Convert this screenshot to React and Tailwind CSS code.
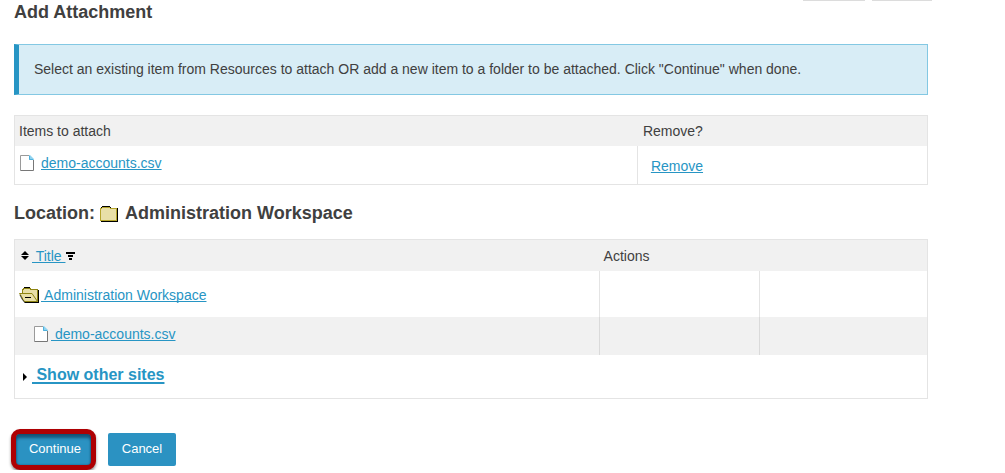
import React from "react";

const linkClass =
  "text-[#2795c4] underline decoration-1 underline-offset-1 [text-decoration-skip-ink:none]";

function FileIcon({ className = "" }) {
  return (
    <svg className={"shrink-0 " + className} width="14" height="16" viewBox="0 0 14 16" fill="none" aria-hidden="true">
      <path d="M.5.5h9l4 4v11H.5z" fill="#fff" />
      <path d="M.5 15.500V.5h9" stroke="#9a9a9a" />
      <path d="M.5 15.500h13V4.500" stroke="#777" />
      <path d="M9 0h1l4 4v1H9z" fill="#8fd3f0" />
      <path d="M9.500 1v3.500H13" stroke="#4fb0dc" />
    </svg>
  );
}

function FolderIcon() {
  return (
    <svg className="mt-0.5 shrink-0" width="18" height="16" viewBox="0 0 18 16" shapeRendering="crispEdges" aria-hidden="true">
      <path d="M1 2h17v14H1z" fill="#000" />
      <path d="M2 0h8v1H2zM1 1h1v1H1zM10 1h1v1h-1z" fill="#000" />
      <path d="M0 2h17v13H0z" fill="#b5a52c" />
      <path d="M2 1h8v1H2z" fill="#b5a52c" />
      <path d="M1 3h15v11H1z" fill="#e8dfa7" />
      <path d="M2 2h8v1H2z" fill="#e8dfa7" />
    </svg>
  );
}

function OpenFolderIcon() {
  return (
    <svg className="shrink-0" width="20" height="16" viewBox="0 0 20 16" aria-hidden="true">
      <g shapeRendering="crispEdges">
        <path d="M5 0h6v1H5zM4 1h1v1H4zM11 1h1v1h-1zM19 3h1v13h-1zM6 15h14v1H6z" fill="#000" />
        <path d="M3 2h1V1h8v1h7v13H5v-1H4v-2H3z" fill="#8e8412" />
        <path d="M4 3h1V2h6v1h7v11H4z" fill="#e8dfa7" />
      </g>
      <path d="M.5 6.500H13l5.500 8H5.500L4 12.500 2.500 9.500z" fill="#e8dfa7" stroke="#8e8412" />
      <path d="M6 10h6v1H6z" fill="#000" />
      <path d="M1 8l2 4 3 4" fill="none" stroke="#000" strokeWidth=".7" />
    </svg>
  );
}

function Caption({ children }) {
  return <h2 className="flex items-center text-lg leading-6 font-bold">{children}</h2>;
}

export default function App() {
  return (
    <div className="bg-white font-['Liberation_Sans',Arial,sans-serif] text-sm leading-5 text-[#404040]">
      <div className="flex h-px justify-end gap-[7px] pr-[73px]" aria-hidden="true">
        <div className="w-[62px] bg-[#dcdcdc]" />
        <div className="w-[60px] bg-[#dcdcdc]" />
      </div>

      <main className="pr-[77px] pl-3.5">
        <h1 className="-mt-px text-lg leading-6 font-bold">Add Attachment</h1>

        <p className="mt-5 border border-l-[5px] border-[#83c8e3] border-l-[#2795c4] bg-[#d8edf6] px-[15px] pt-3.5 pb-[15px]">
          Select an existing item from Resources to attach OR add a new item to a folder to be
          attached. Click "Continue" when done.
        </p>

        <table className="mt-5 w-full table-fixed border-separate border-spacing-0 border border-[#e4e4e4] text-left">
          <colgroup>
            <col className="w-[68.3%]" />
            <col />
          </colgroup>
          <thead className="bg-[#f1f1f1]">
            <tr>
              <th className="h-[30px] px-1 font-normal">Items to attach</th>
              <th className="px-[5px] font-normal">Remove?</th>
            </tr>
          </thead>
          <tbody>
            <tr>
              <td className="h-[38px] border-r border-[#e4e4e4] px-[5px] pb-1">
                <div className="flex items-center gap-[7px]">
                  <FileIcon />
                  <a href="#file" className={linkClass}>demo-accounts.csv</a>
                </div>
              </td>
              <td className="px-[13px] pt-0.5">
                <a href="#remove" className={linkClass}>Remove</a>
              </td>
            </tr>
          </tbody>
        </table>

        <div className="mt-4">
          <Caption>
            <span className="mr-[5px]">Location:</span>
            <FolderIcon />
            <span className="ml-[7px]">Administration Workspace</span>
          </Caption>
        </div>

        <table className="mt-3.5 w-full table-fixed border-separate border-spacing-0 border border-[#e4e4e4] text-left">
          <colgroup>
            <col className="w-[64.1%]" />
            <col className="w-[17.6%]" />
            <col />
          </colgroup>
          <thead className="bg-[#f1f1f1]">
            <tr>
              <th className="h-[31px] px-1.5 font-normal">
                <div className="flex items-center">
                  <svg className="mr-[3px]" width="8" height="9" viewBox="0 0 8 9" fill="#000" aria-hidden="true">
                    <path d="M4 0l4 4H0zM0 5h8L4 9z" />
                  </svg>
                  <a href="#title" className={linkClass + " whitespace-pre"}>{" Title "}</a>
                  <svg className="ml-px" width="9" height="8" viewBox="0 0 9 8" fill="#000" aria-hidden="true">
                    <path d="M0 0h9v2H0zM2 3h5v2H2zM3 6h3v2H3z" />
                  </svg>
                </div>
              </th>
              <th className="px-1 font-normal" colSpan={2}>Actions</th>
            </tr>
          </thead>
          <tbody>
            <tr>
              <td className="h-[46px] border-r border-[#e4e4e4] px-1 pt-0.5">
                <div className="flex items-center gap-[2px]">
                  <OpenFolderIcon />
                  <a href="#workspace" className={linkClass + " whitespace-pre"}>{" Administration Workspace"}</a>
                </div>
              </td>
              <td className="border-r border-[#e4e4e4]" />
              <td />
            </tr>
            <tr className="bg-[#f1f1f1]">
              <td className="h-[38px] border-r border-[#dadada] pr-1 pb-1 pl-[19px]">
                <div className="flex items-center gap-[3px]">
                  <FileIcon />
                  <a href="#accounts" className={linkClass + " whitespace-pre"}>{" demo-accounts.csv"}</a>
                </div>
              </td>
              <td className="border-r border-[#dadada]" />
              <td />
            </tr>
            <tr>
              <td className="h-[43px] px-2 pb-1" colSpan={3}>
                <div className="flex items-center gap-[5px]">
                  <svg className="mt-1" width="4" height="8" viewBox="0 0 4 8" fill="#000" aria-hidden="true">
                    <path d="M0 0l4 4-4 4z" />
                  </svg>
                  <a
                    href="#sites"
                    className="text-base font-bold whitespace-pre text-[#2795c4] underline decoration-2 underline-offset-2"
                  >
                    {" Show other sites"}
                  </a>
                </div>
              </td>
            </tr>
          </tbody>
        </table>

        <div className="mt-[30px] -ml-[3px] flex items-center gap-3 text-[13px] text-white">
          <button
            type="button"
            className="h-[41px] w-[85px] rounded-[9px] border-[5px] border-[#ae0003] bg-[#2b92c2] pb-0.5 pl-[3px] shadow-[0_2px_3px_rgba(0,0,0,0.45),inset_0_4px_3px_rgba(0,40,70,0.55),inset_0_0_2px_rgba(0,40,70,0.6)]"
          >
            Continue
          </button>
          <button type="button" className="h-[33px] w-[68px] rounded-xs bg-[#2b92c2] pb-0.5">
            Cancel
          </button>
        </div>
      </main>
    </div>
  );
}
